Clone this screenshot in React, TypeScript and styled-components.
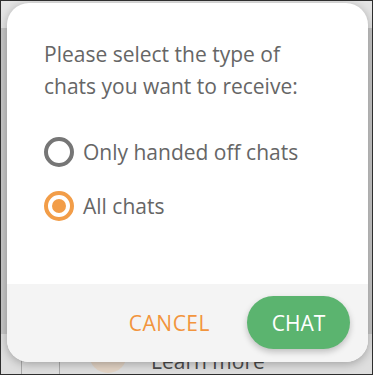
import React, { useState } from 'react'
import styled, { createGlobalStyle } from 'styled-components'

const GlobalStyle = createGlobalStyle`
  html, body {
    margin: 0;
    padding: 0;
    background: #ffffff;
  }
  * {
    box-sizing: border-box;
  }
`

const Page = styled.div`
  position: relative;
  width: 373px;
  height: 375px;
  overflow: hidden;
  border: 1px solid #2e2e2e;
  font-family: 'Open Sans', 'Noto Sans', sans-serif;
`

// the page that lies under the dimmed backdrop
const Underlay = styled.div`
  display: flex;
  flex-direction: column;
  height: 100%;
  background: #c6c6c6;
`

const TopBar = styled.div`
  height: 27px;
  background: #e4e4e4;
`

const Main = styled.div`
  flex: 1;
  display: flex;
  flex-direction: column;
  justify-content: flex-end;
`

const LearnRow = styled.div`
  display: flex;
  align-items: center;
  height: 40px;
  background: #dedede;
`

const Rail = styled.div<{ $width: number }>`
  width: ${p => p.$width}px;
  align-self: stretch;
  border-right: 1px solid #a9a9a9;
`

const Avatar = styled.div`
  width: 38px;
  height: 38px;
  margin-left: 29px;
  border-radius: 50%;
  background: #e2d3c4;
`

const LearnText = styled.span`
  margin-left: 24px;
  margin-top: 14px;
  font-size: 21px;
  color: #4a4a4a;
`

const Overlay = styled.div`
  position: absolute;
  inset: 0;
  padding: 2px 4px 12px 6px;
  display: flex;
`

const Dialog = styled.div`
  flex: 1;
  display: flex;
  flex-direction: column;
  border-radius: 22px;
  overflow: hidden;
  background: #ffffff;
  box-shadow: 0 2px 10px rgba(0, 0, 0, 0.28);
`

const Body = styled.div`
  flex: 1;
  padding: 36px 20px 0 37px;
`

const Prompt = styled.p`
  margin: 0;
  font-size: 21px;
  line-height: 31.5px;
  color: #666666;
`

const Options = styled.div`
  display: flex;
  flex-direction: column;
  gap: 24px;
  margin-top: 35px;
`

const Option = styled.label`
  display: flex;
  align-items: center;
  gap: 9px;
  height: 30px;
  cursor: pointer;
`

const RadioMark = styled.span<{ $checked: boolean }>`
  position: relative;
  width: 30px;
  height: 30px;
  border-radius: 50%;
  border: 4px solid ${p => (p.$checked ? '#f29d48' : '#767676')};
  flex-shrink: 0;

  &::after {
    content: '';
    position: absolute;
    inset: 4px;
    border-radius: 50%;
    background: ${p => (p.$checked ? '#f29d48' : 'transparent')};
  }
`

const OptionLabel = styled.span`
  font-size: 21px;
  line-height: 30px;
  color: #666666;
`

const Footer = styled.div`
  height: 78px;
  display: flex;
  align-items: center;
  justify-content: flex-end;
  gap: 19px;
  padding: 0 18px 1px 0;
  background: #f4f4f4;
`

const TextButton = styled.button`
  height: 53px;
  padding: 0 18px;
  border: none;
  background: transparent;
  font-family: inherit;
  font-size: 21px;
  letter-spacing: 0.5px;
  color: #f2953d;
  cursor: pointer;
`

const PillButton = styled.button`
  width: 103px;
  height: 53px;
  border: none;
  border-radius: 27px;
  background: #5bb46f;
  box-shadow: 0 3px 6px rgba(0, 0, 0, 0.22);
  font-family: inherit;
  font-size: 21px;
  color: #ffffff;
  cursor: pointer;
`

const options = [
  { id: 'handoff', label: 'Only handed off chats' },
  { id: 'all', label: 'All chats' }
]

const App = () => {
  const [choice, setChoice] = useState('all')

  return (
    <Page>
      <GlobalStyle />
      <Underlay>
        <TopBar />
        <Main>
          <LearnRow>
            <Rail $width={21} />
            <Rail $width={38} />
            <Avatar />
            <LearnText>Learn more</LearnText>
          </LearnRow>
        </Main>
      </Underlay>
      <Overlay>
        <Dialog>
          <Body>
            <Prompt>
              Please select the type of
              <br />
              chats you want to receive:
            </Prompt>
            <Options>
              {options.map(o => (
                <Option key={o.id} onClick={() => setChoice(o.id)}>
                  <RadioMark $checked={choice === o.id} />
                  <OptionLabel>{o.label}</OptionLabel>
                </Option>
              ))}
            </Options>
          </Body>
          <Footer>
            <TextButton>CANCEL</TextButton>
            <PillButton>CHAT</PillButton>
          </Footer>
        </Dialog>
      </Overlay>
    </Page>
  )
}

export default App
